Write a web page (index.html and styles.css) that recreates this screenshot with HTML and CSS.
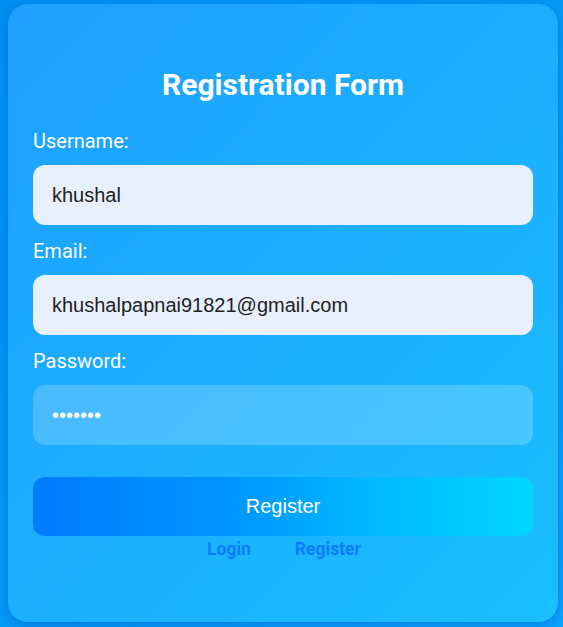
FILE: index.html
```html
<!DOCTYPE html>
<html lang="en">
<head>
<meta charset="utf-8">
<title>Registration Form</title>
<link rel="stylesheet" href="styles.css">
</head>
<body>
<div class="card">
  <h2 class="title">Registration Form</h2>
  <form class="form">
    <label class="label" for="u">Username:</label>
    <input class="field filled" id="u" type="text" value="khushal">
    <label class="label" for="e">Email:</label>
    <input class="field filled" id="e" type="text" value="khushalpapnai91821@gmail.com">
    <label class="label" for="p">Password:</label>
    <input class="field pass" id="p" type="password" value="1234567">
    <button class="btn" type="button">Register</button>
    <div class="links">
      <a class="link" href="#">Login</a>
      <a class="link" href="#">Register</a>
    </div>
  </form>
</div>
</body>
</html>
```

FILE: styles.css
```css
html, body {
  margin: 0;
  height: 100%;
}
body {
  background: linear-gradient(135deg, #0090f2 0%, #0aa6ff 100%);
  padding: 4px 5px 5px 8px;
  box-sizing: border-box;
  font-family: Roboto, "Liberation Sans", sans-serif;
}
.card {
  width: 550px;
  height: 618px;
  box-sizing: border-box;
  padding: 61px 25px 25px 25px;
  border-radius: 20px;
  background: linear-gradient(135deg, #1e9fff 0%, #1bb0ff 55%, #1abfff 100%);
  box-shadow: 0 4px 14px rgba(0, 60, 160, 0.35);
}
.title {
  margin: 0 0 24px 0;
  text-align: center;
  color: #fff;
  font-size: 30px;
  line-height: 40px;
  font-weight: 700;
}
.form {
  display: flex;
  flex-direction: column;
}
.label {
  color: #fff;
  font-size: 20px;
  line-height: 24px;
  margin-bottom: 12px;
}
.field {
  height: 60px;
  box-sizing: border-box;
  border: none;
  outline: none;
  border-radius: 12px;
  padding: 0 19px;
  font-family: "Liberation Sans", Arial, sans-serif;
  font-size: 20px;
  color: #222;
  margin-bottom: 14px;
}
.filled {
  background: #e8f0fe;
}
.pass {
  background: rgba(255, 255, 255, 0.2);
  color: #fff;
  margin-bottom: 32px;
}
.btn {
  height: 59px;
  border: none;
  border-radius: 12px;
  background: linear-gradient(90deg, #007bff 0%, #0096ff 40%, #00bbff 70%, #00d6ff 100%);
  color: #fff;
  font-family: "Liberation Sans", Arial, sans-serif;
  font-size: 20px;
}
.links {
  display: flex;
  justify-content: center;
  gap: 44px;
  line-height: 26px;
  margin-left: 2px;
}
.link {
  color: #0a7cff;
  font-weight: 700;
  font-size: 17.5px;
  text-decoration: none;
}
```
